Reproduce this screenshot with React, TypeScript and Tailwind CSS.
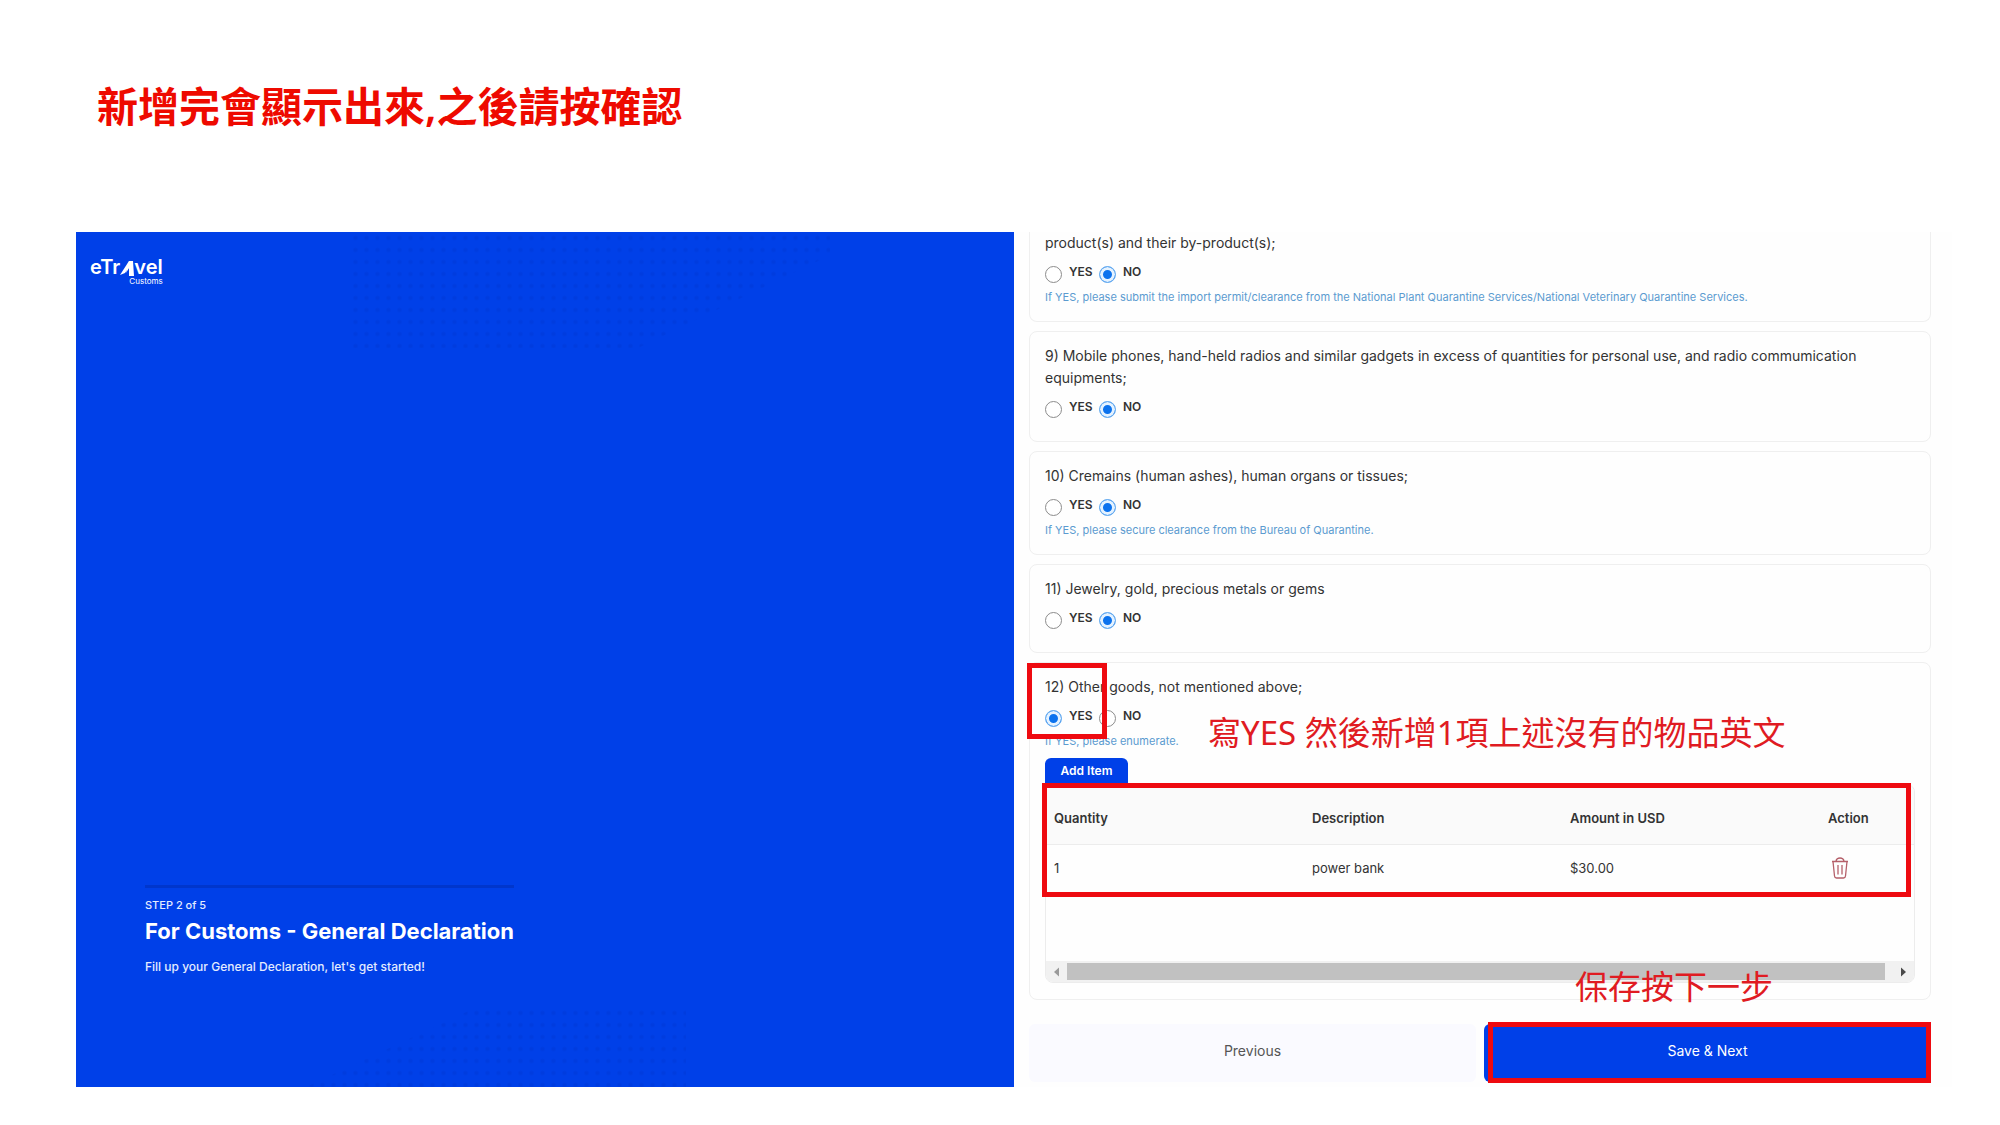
import { useState } from 'react'

interface Question {
  id: string
  text: string
  hint?: string
  answer: 'YES' | 'NO'
}

interface Item {
  id: number
  quantity: number
  description: string
  amount: string
}

const questions: Question[] = [
  {
    id: 'q8',
    text: 'product(s) and their by-product(s);',
    hint: 'If YES, please submit the import permit/clearance from the National Plant Quarantine Services/National Veterinary Quarantine Services.',
    answer: 'NO',
  },
  {
    id: 'q9',
    text: '9) Mobile phones, hand-held radios and similar gadgets in excess of quantities for personal use, and radio commumication equipments;',
    answer: 'NO',
  },
  {
    id: 'q10',
    text: '10) Cremains (human ashes), human organs or tissues;',
    hint: 'If YES, please secure clearance from the Bureau of Quarantine.',
    answer: 'NO',
  },
  { id: 'q11', text: '11) Jewelry, gold, precious metals or gems', answer: 'NO' },
]

const initialItems: Item[] = [{ id: 1, quantity: 1, description: 'power bank', amount: '$30.00' }]

function Radio({ name, label, checked, onChange }: { name: string; label: string; checked: boolean; onChange: () => void }) {
  const id = `${name}-${label}`
  return (
    <>
      <input
        id={id}
        type="radio"
        name={name}
        checked={checked}
        onChange={onChange}
        className="w-[17px] h-[17px] mt-1 appearance-none rounded-full border border-[#8c8c8c] bg-white checked:border-[#6cb0f0] checked:bg-[#0b72ee] checked:shadow-[inset_0_0_0_3px_#e4f2ff]"
      />
      <label htmlFor={id} className="text-[12px] leading-4 font-semibold text-[#333]">
        {label}
      </label>
    </>
  )
}

function Answer({ name, initial }: { name: string; initial: 'YES' | 'NO' }) {
  const [value, setValue] = useState(initial)
  return (
    <div className="flex items-center h-5 mt-2">
      <div className="flex items-center gap-[7px] w-[54px]">
        <Radio name={name} label="YES" checked={value === 'YES'} onChange={() => setValue('YES')} />
      </div>
      <div className="flex items-center gap-[7px]">
        <Radio name={name} label="NO" checked={value === 'NO'} onChange={() => setValue('NO')} />
      </div>
    </div>
  )
}

function Hint({ children }: { children: string }) {
  return <p className="mt-[7px] text-[11px] leading-4 text-[#5b9bd0]">{children}</p>
}

function Logo() {
  return (
    <div className="w-fit text-white">
      <div className="flex items-end text-[20px] leading-5 font-semibold">
        <span>eTr</span>
        <svg viewBox="0 0 14 18" className="w-[14px] h-[18px]" fill="currentColor" aria-hidden="true">
          <path d="M9 2 H13 L14 17 H9 L9 9 L6 14 Z" />
          <path d="M9 2 L10 7 L5 14 L0 16 Z" />
        </svg>
        <span>vel</span>
      </div>
      <p className="text-right text-[8px] leading-[8px]">Customs</p>
    </div>
  )
}

function TrashIcon() {
  return (
    <svg viewBox="0 0 18 22" className="w-[18px] h-[22px]" fill="none" stroke="#b5606a" strokeWidth="1.300" aria-hidden="true">
      <path d="M1 4.500 H17" />
      <path d="M5 4 C5.500 1.500 6.500 1 9 1 C11.500 1 12.500 1.500 13 4" />
      <path d="M2 4.500 L3.500 19 Q3.700 21 5.500 21 H12.500 Q14.300 21 14.500 19 L16 4.500" />
      <path d="M7 8 V17.500 M11 8 V17.500" />
    </svg>
  )
}

function ItemsTable() {
  const [items, setItems] = useState(initialItems)

  return (
    <div className="relative mt-px h-[199px] flex flex-col rounded-lg border border-[#ececec] overflow-hidden">
      <table className="w-full table-fixed text-left text-[13px] text-[#333]">
        <colgroup>
          <col />
          <col />
          <col />
          <col className="w-[94px]" />
        </colgroup>
        <thead>
          <tr className="h-[59px] bg-[#fafafa] border-b border-[#ececec]">
            <th className="pl-2 pt-2 font-semibold">Quantity</th>
            <th className="pl-2 pt-2 font-semibold">Description</th>
            <th className="pl-2 pt-2 font-semibold">Amount in USD</th>
            <th className="pl-2 pt-2 font-semibold">Action</th>
          </tr>
        </thead>
        <tbody>
          {items.map((item) => (
            <tr key={item.id} className="h-12">
              <td className="pl-2">{item.quantity}</td>
              <td className="pl-2">{item.description}</td>
              <td className="pl-2">{item.amount}</td>
              <td className="pl-[11px]">
                <button
                  type="button"
                  aria-label="Delete item"
                  onClick={() => setItems(items.filter((i) => i.id !== item.id))}
                  className="block"
                >
                  <TrashIcon />
                </button>
              </td>
            </tr>
          ))}
        </tbody>
      </table>

      {/* Horizontal scrollbar */}
      <div className="mt-auto h-[21px] flex items-center bg-[#f1f1f1]">
        <svg viewBox="0 0 21 10" className="w-[21px] h-[10px]" fill="#9a9a9a" aria-hidden="true">
          <path d="M13 0.500 V9.500 L8 5 Z" />
        </svg>
        <div className="flex-1 h-[17px] bg-[#c1c1c1]" />
        <svg viewBox="0 0 29 10" className="w-[29px] h-[10px]" fill="#4a4a4a" aria-hidden="true">
          <path d="M16 0.500 V9.500 L21 5 Z" />
        </svg>
      </div>
    </div>
  )
}

export default function App() {
  return (
    <main className="min-h-screen bg-white pt-[81px] pl-[76px] pr-12 font-['Inter','Noto_Sans_CJK_TC',sans-serif]">
      <h1 className="pl-[21px] text-[41px] leading-[50px] font-semibold text-[#ee0a00] font-['Noto_Sans','Noto_Sans_CJK_TC',sans-serif]">
        新增完會顯示出來,之後請按確認
      </h1>

      <div className="mt-[101px] grid grid-cols-2">
        <aside className="relative flex flex-col justify-between bg-[#0040e8] pt-[25px] pl-[14px] pb-[110px] overflow-hidden">
          {/* Dotted corners */}
          <div className="absolute top-0 left-[274px] w-[480px] h-[116px] bg-[radial-gradient(circle,#0038d6_1px,transparent_3px)] bg-[size:11px_12px] opacity-50 [clip-path:polygon(0_0,100%_0,100%_20%,60%_100%,0_100%)]" />
          <div className="absolute bottom-0 left-[230px] w-[380px] h-[80px] bg-[radial-gradient(circle,#0038d6_1px,transparent_3px)] bg-[size:11px_12px] opacity-50 [clip-path:polygon(45%_0,100%_0,100%_100%,0_100%)]" />
          <Logo />
          <div className="w-fit ml-[55px] border-t-[3px] border-[#0036cc] text-[#e4ecff]">
            <p className="mt-[9px] text-[11px] leading-4 font-medium">STEP 2 of 5</p>
            <h2 className="mt-1 text-[22px] leading-7 font-bold text-white">For Customs - General Declaration</h2>
            <p className="mt-3 text-[12px] leading-5 font-medium">Fill up your General Declaration, let's get started!</p>
          </div>
        </aside>

        <section className="flex flex-col gap-[9px] pl-[15px] pr-[21px] pb-[5px] bg-[#fefefe]">
          {questions.map((q, i) => (
            <div
              key={q.id}
              className={`px-[15px] border border-[#efefef] ${i === 0 ? 'border-t-0 rounded-b-lg' : 'pt-[13px] rounded-lg'} ${
                q.hint ? 'pb-4' : 'pb-6'
              }`}
            >
              <p className="text-[14px] leading-[22px] text-[#333]">{q.text}</p>
              <Answer name={q.id} initial={q.answer} />
              {q.hint && <Hint>{q.hint}</Hint>}
            </div>
          ))}

          <div className="relative px-[15px] pt-[13px] pb-4 border border-[#efefef] rounded-lg">
            <p className="text-[14px] leading-[22px] text-[#333]">12) Other goods, not mentioned above;</p>
            <Answer name="q12" initial="YES" />
            <Hint>If YES, please enumerate.</Hint>
            <button type="button" className="block mt-[9px] h-[25px] w-[83px] rounded-t-md bg-[#0040e8] text-[12px] font-semibold text-white">
              Add Item
            </button>
            <ItemsTable />

            {/* Callouts */}
            <div className="absolute -left-[3px] top-0 w-[80px] h-[76px] border-[5px] border-[#ee0a10]" />
            <div className="absolute left-[12px] right-[19px] top-[120px] h-[114px] border-[5px] border-[#ee0a10]" />
            <p className="absolute left-[178px] top-[46px] text-[33px] leading-[48px] whitespace-nowrap text-[#e01b22] font-['Noto_Sans','Noto_Sans_CJK_TC',sans-serif]">
              寫YES 然後新增1項上述沒有的物品英文
            </p>
            <p className="absolute right-[157px] -bottom-3 text-[33px] leading-[48px] whitespace-nowrap text-[#e01b22] font-['Noto_Sans','Noto_Sans_CJK_TC',sans-serif]">
              保存按下一步
            </p>
          </div>

          <div className="mt-[15px] grid grid-cols-2 gap-2 text-[14px]">
            <button type="button" className="h-[58px] pb-1.5 rounded-md bg-[#fafaff] text-[#555]">
              Previous
            </button>
            <div className="relative">
              <button type="button" className="block w-full h-[58px] pb-1.5 rounded-md bg-[#0040e8] text-white">
                Save &amp; Next
              </button>
              <div className="absolute left-1 right-0 -top-0.5 -bottom-px border-[5px] border-[#ee0a10]" />
            </div>
          </div>
        </section>
      </div>
    </main>
  )
}
